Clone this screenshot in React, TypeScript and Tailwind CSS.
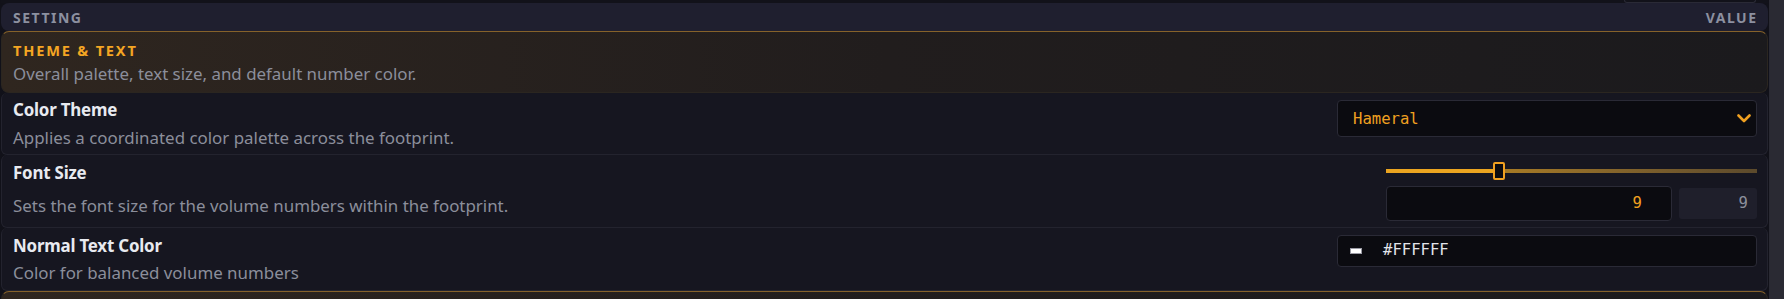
import React from "react";

const sans = "font-['Noto_Sans','Open_Sans',sans-serif]";
const mono = "font-['DejaVu_Sans_Mono','Liberation_Mono',monospace]";

function Chevron() {
  return (
    <svg width="14" height="9" viewBox="0 0 14 9" fill="none">
      <polyline points="1.5,1.5 7,7 12.5,1.5" stroke="#f0a020" strokeWidth="2.6" strokeLinecap="round" strokeLinejoin="round" />
    </svg>
  );
}

function Row({
  title,
  desc,
  h,
  gap,
  children,
}: {
  title: string;
  desc: string;
  h: string;
  gap: string;
  children: React.ReactNode;
}) {
  return (
    <div className={`${h} shrink-0 flex justify-between border border-t-0 border-[#23232e] rounded-md bg-[#161620]`}>
      <div className={`flex flex-col justify-center pl-[11px] ${gap}`}>
        <div className="text-[16.9px] leading-[22px] font-bold text-[#e8eaf0] tracking-[-0.2px]">{title}</div>
        <div className="text-[16.9px] leading-[22px] text-[#8b8e9b]">{desc}</div>
      </div>
      <div className="pt-[7px] pr-[10px] flex flex-col items-end">{children}</div>
    </div>
  );
}

export default function App() {
  return (
    <div className={`w-[1784px] h-[299px] overflow-hidden bg-[#111119] flex ${sans}`}>
      <div className="flex-1 flex flex-col pl-[1px] pr-[1px]">
        <div className="h-[3px] shrink-0 flex justify-end pr-[12px] bg-[#12121a]">
          <div className="w-[132px] h-[3px] border border-t-0 border-[#2a2a36] rounded-b-md" />
        </div>
        <div className="h-[28px] shrink-0 rounded-lg bg-[#1f1f2f] flex items-center justify-between px-[12px] text-[14px] font-bold tracking-[1.5px] text-[#8c90a0]">
          <span>SETTING</span>
          <span className="mr-[-1.5px]">VALUE</span>
        </div>
        <div className="h-[62px] shrink-0 rounded-lg border border-[#2b2620] border-t-[#86622a] bg-gradient-to-r from-[#2f261f] via-[#211d1d] to-[#1b1a1d] pl-[11px] pt-[9px]">
          <div className="text-[14.6px] leading-[18px] font-bold tracking-[1.8px] text-[#f5a623]">THEME &amp; TEXT</div>
          <div className="mt-[4px] text-[16.9px] leading-[22px] text-[#8b8e9b]">Overall palette, text size, and default number color.</div>
        </div>
        <Row title="Color Theme" desc="Applies a coordinated color palette across the footprint." h="h-[62px]" gap="gap-[6px]">
          <div className="w-[420px] h-[37px] rounded-[4px] border border-[#2a2a36] bg-[#0b0b10] flex items-center justify-between pl-[15px] pr-[5px]">
            <span className={`${mono} text-[15.6px] text-[#f0a020] pt-[2px]`}>Hameral</span>
            <Chevron />
          </div>
        </Row>
        <Row title="Font Size" desc="Sets the font size for the volume numbers within the footprint." h="h-[73px]" gap="gap-[11px] pb-[4px]">
          <div className="w-[371px] flex flex-col">
            <div className="relative h-[18px] flex items-center">
              <div className="w-full h-[4px] flex">
                <div className="w-[113px] h-full bg-[#eaa420]" />
                <div className="flex-1 h-full bg-gradient-to-r from-[#a87b24] to-[#5c4a2c]" />
              </div>
              <div className="absolute left-[107px] top-0 w-[12px] h-[18px] rounded-[2px] border-2 border-[#f0a020] bg-[#0b0b10]" />
            </div>
            <div className="mt-[6px] flex items-center gap-[7px]">
              <div className="w-[286px] h-[35px] rounded-[4px] border border-[#2a2a36] bg-[#0b0b10] flex items-center justify-end pr-[29px]">
                <span className={`${mono} text-[15.6px] text-[#f0a020]`}>9</span>
              </div>
              <div className="w-[78px] h-[31px] rounded-[3px] bg-[#1f1f2b] flex items-center justify-end pr-[9px]">
                <span className={`${mono} text-[15.6px] text-[#8c8f9c]`}>9</span>
              </div>
            </div>
          </div>
        </Row>
        <Row title="Normal Text Color" desc="Color for balanced volume numbers" h="h-[63px]" gap="gap-[5px]">
          <div className="w-[420px] h-[32px] rounded-[4px] border border-[#2a2a36] bg-[#0b0b10] flex items-center pl-[12px]">
            <div className="w-[12px] h-[6px] bg-white border border-[#9a9aa4]" />
            <span className={`${mono} ml-[21px] text-[15.6px] text-[#e2e4ea]`}>#FFFFFF</span>
          </div>
        </Row>
        <div className="h-[20px] shrink-0 rounded-t-lg border border-b-0 border-[#2b2620] border-t-[#86622a] bg-gradient-to-r from-[#2f261f] via-[#211d1d] to-[#1b1a1d]" />
      </div>
      <div className="w-[15px] shrink-0 bg-[#2a2a33]" />
    </div>
  );
}
